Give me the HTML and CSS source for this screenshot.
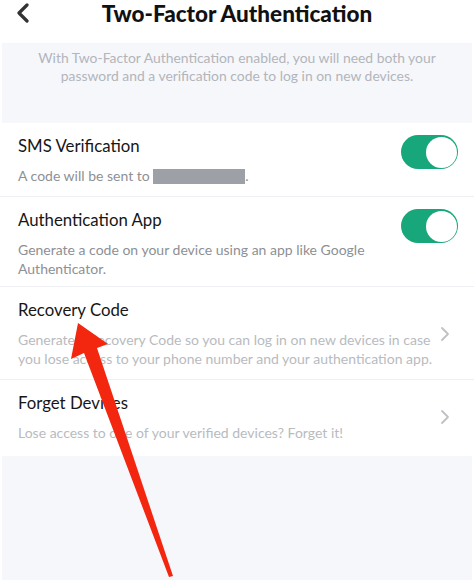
FILE: index.html
```html
<!DOCTYPE html>
<html lang="en">
<head>
    <meta charset="UTF-8">
    <meta name="viewport" content="width=device-width, initial-scale=1.0">
    <title>Two-Factor Authentication</title>
    <link rel="stylesheet" href="styles.css">
</head>
<body>
    <div class="screen">
        <header class="topbar">
            <a href="#" class="topbar-back">
                <svg width="14" height="20" viewBox="0 0 14 20">
                    <path d="M11 2 L3 10 L11 18" fill="none" stroke="#333" stroke-width="3.2" stroke-linecap="round" stroke-linejoin="round"/>
                </svg>
            </a>
            <h1 class="topbar-title">Two-Factor Authentication</h1>
        </header>

        <div class="info">
            With Two-Factor Authentication enabled, you will need both your password and a verification code to log in on new devices.
        </div>

        <div class="list">
            <div class="row row-sms">
                <div class="row-text">
                    <div class="row-title">SMS Verification</div>
                    <div class="row-desc">A code will be sent to <span class="redacted"></span>.</div>
                </div>
                <span class="toggle on"><span class="toggle-knob"></span></span>
            </div>
            <div class="row row-app">
                <div class="row-text">
                    <div class="row-title">Authentication App</div>
                    <div class="row-desc">Generate a code on your device using an app like Google Authenticator.</div>
                </div>
                <span class="toggle on"><span class="toggle-knob"></span></span>
            </div>
            <div class="row row-recovery">
                <div class="row-text">
                    <div class="row-title">Recovery Code</div>
                    <div class="row-desc light">Generate a Recovery Code so you can log in on new devices in case you lose access to your phone number and your authentication app.</div>
                </div>
                <svg class="chevron" width="10" height="16" viewBox="0 0 10 16">
                    <path d="M2 2 L8 8 L2 14" fill="none" stroke="#bfc1c5" stroke-width="1.8" stroke-linecap="round" stroke-linejoin="round"/>
                </svg>
            </div>
            <div class="row row-forget">
                <div class="row-text">
                    <div class="row-title">Forget Devices</div>
                    <div class="row-desc light">Lose access to one of your verified devices? Forget it!</div>
                </div>
                <svg class="chevron" width="10" height="16" viewBox="0 0 10 16">
                    <path d="M2 2 L8 8 L2 14" fill="none" stroke="#bfc1c5" stroke-width="1.8" stroke-linecap="round" stroke-linejoin="round"/>
                </svg>
            </div>
        </div>

        <div class="filler"></div>

        <!-- red annotation arrow drawn over the screenshot -->
        <svg class="annotation" width="474" height="582" viewBox="0 0 474 582">
            <polygon points="78,323 71,359 84,353 169,577 173,576 97,348 108,344" fill="#f3260f"/>
        </svg>
    </div>
</body>
</html>
```

FILE: styles.css
```css
body {
    margin: 0;
    background-color: #ffffff;
    font-family: Lato, "Noto Sans", sans-serif;
}

.screen {
    position: relative;
    width: 474px;
    height: 582px;
    display: flex;
    flex-direction: column;
    overflow: hidden;
}

.topbar {
    position: relative;
    height: 43px;
    display: flex;
    justify-content: center;
    align-items: flex-start;
    background-color: #ffffff;
}

.topbar-back {
    position: absolute;
    left: 16px;
    top: 3px;
}

.topbar-title {
    margin: 0;
    padding-top: 1px;
    font-size: 22.5px;
    line-height: 26px;
    font-weight: 900;
    color: #111111;
}

.info {
    height: 80px;
    box-sizing: border-box;
    padding: 6px 20px 0;
    margin: 0 2px;
    background-color: #f6f7fa;
    color: #b2b5bb;
    font-size: 13.9px;
    line-height: 18px;
    text-align: center;
}

.list {
    background-color: #ffffff;
}

.row {
    display: flex;
    align-items: center;
    padding: 12px 16px 11px 18px;
    border-bottom: 1px solid #eff0f3;
}

.row-app {
    padding-bottom: 8px;
}

.row-forget {
    padding-bottom: 14px;
    border-bottom: none;
}

.row-text {
    flex: 1;
}

.row-title {
    font-size: 16.8px;
    line-height: 22px;
    color: #161616;
}

.row-desc {
    margin-top: 9px;
    font-size: 14px;
    line-height: 19px;
    color: #8d9095;
}

.row-desc.light {
    color: #b8bbc0;
}

.redacted {
    display: inline-block;
    width: 92px;
    height: 15px;
    vertical-align: -3px;
    background-color: #9da0a6;
}

.toggle {
    align-self: flex-start;
    position: relative;
    width: 57px;
    height: 34px;
    border-radius: 17px;
    background-color: #18a77a;
}

.toggle-knob {
    position: absolute;
    right: 1.5px;
    top: 1.5px;
    width: 31px;
    height: 31px;
    border-radius: 50%;
    background-color: #ffffff;
}

.chevron {
    margin-left: 4px;
    margin-right: 8px;
}

.filler {
    flex: 1;
    margin: 0 2px 2px;
    background-color: #f6f7fa;
}

.annotation {
    position: absolute;
    left: 0;
    top: 0;
    pointer-events: none;
}
```
